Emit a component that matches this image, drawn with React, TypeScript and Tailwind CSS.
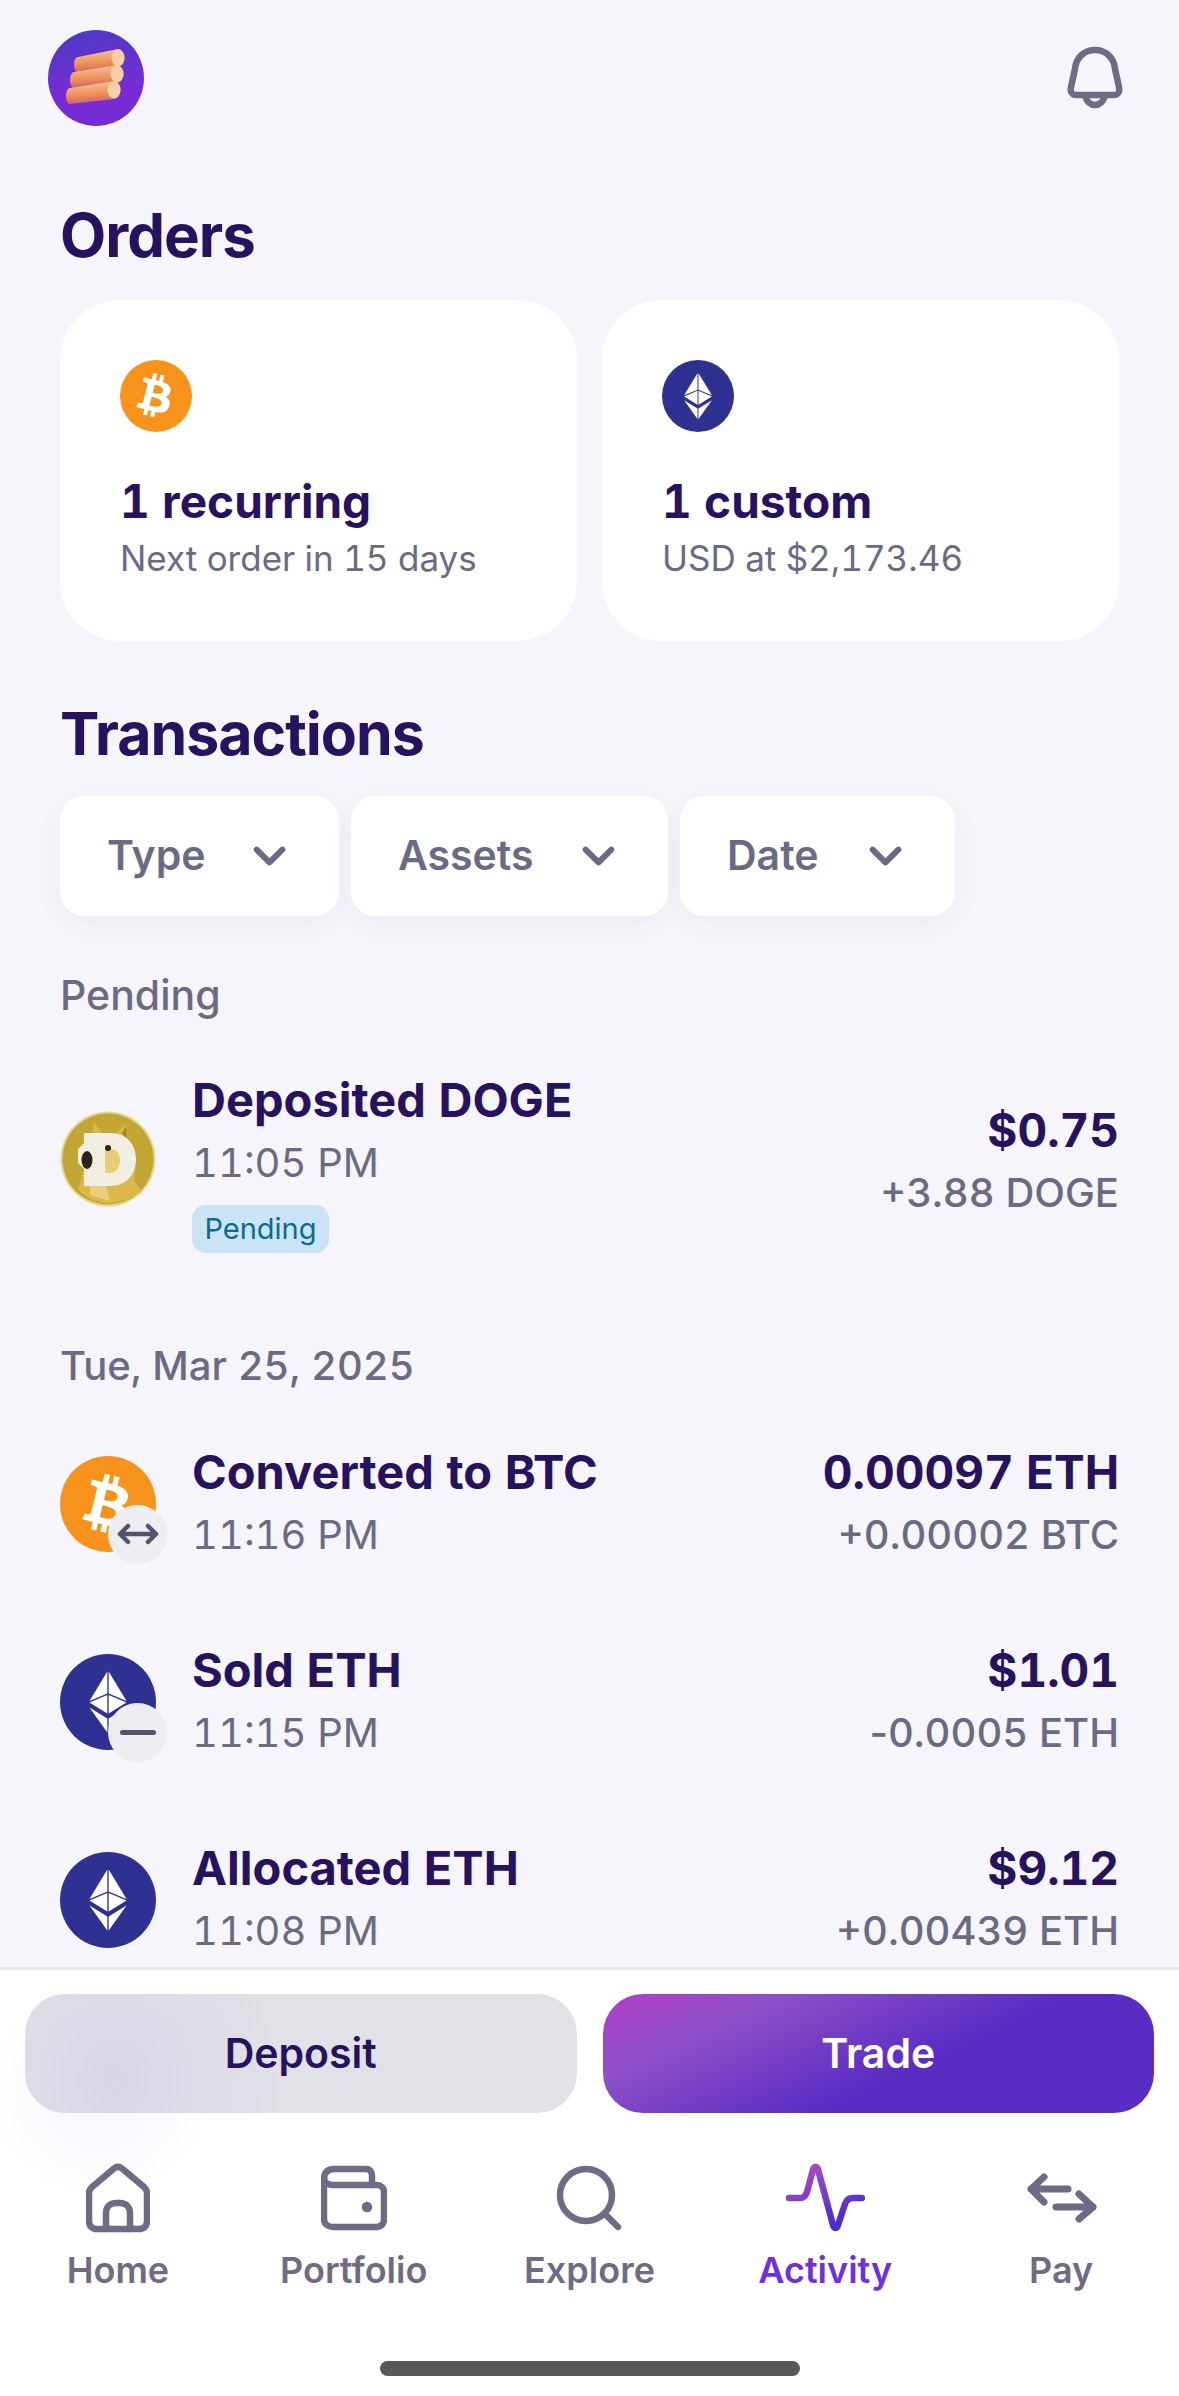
import React from 'react';
import { FaBtc } from 'react-icons/fa';

const font = "font-['Inter','Liberation_Sans',sans-serif]";

const EthMark = () => (
  <svg viewBox="0 0 96 96" className="h-full w-full">
    <circle cx="48" cy="48" r="48" fill="#2f3192" />
    <g fill="#fff">
      <polygon points="47.3,17.5 47.3,39.5 29.5,47" />
      <polygon points="48.7,17.5 48.7,39.5 66.5,47" />
      <polygon points="47.3,41 47.3,59.5 29.5,48.5" />
      <polygon points="48.7,41 48.7,59.5 66.5,48.5" />
      <polygon points="29.5,53.5 47.3,64.5 47.3,78.5" />
      <polygon points="66.5,53.5 48.7,64.5 48.7,78.5" />
    </g>
  </svg>
);

const BtcMark = () => (
  <div className="flex h-full w-full items-center justify-center rounded-full bg-[#f7931a]">
    <FaBtc className="h-[60%] w-[60%] rotate-[14deg] text-white" />
  </div>
);

const DogeMark = () => (
  <svg viewBox="0 0 96 96" className="h-full w-full">
    <circle cx="48" cy="48" r="47.5" fill="#e6d893" />
    <circle cx="48" cy="48" r="45.5" fill="#c2a633" />
    <path d="M32 24 L34 11 L42 22 L56 22 L66 13 L68 30 L76 50 L74 70 L82 80 Q66 92 48 92 Q30 92 18 78 L24 58 Z" fill="#dcb848" />
    <path d="M62 22 L66 15 L67 28 Z" fill="#a8842c" />
    <path d="M30 74 L46 74 L50 90 L30 84 Z" fill="#e8cf7a" />
    <path d="M24 22 H50 C67 22 76 34 76 48 C76 64 66 75 50 75 H24 V58 L18 52 V38 L24 32 Z" fill="#f2efe2" />
    <path d="M45 38 H50 C57 38 60 43 60 49 C60 56 56 62 50 62 H45 Z" fill="#e8cd78" />
    <ellipse cx="27" cy="49" rx="5.5" ry="9" fill="#2a2418" />
    <circle cx="48" cy="37" r="3" fill="#2a2418" />
  </svg>
);

const Logo = () => (
  <div className="h-24 w-24 rounded-full bg-[linear-gradient(170deg,#4b3bc4,#7a2bd6_70%,#6f2fd0)]">
    <svg viewBox="0 0 96 96" className="h-full w-full">
      <defs>
        <linearGradient id="log" x1="0" y1="0" x2="0.15" y2="1">
          <stop offset="0" stopColor="#f5c9a8" />
          <stop offset="0.65" stopColor="#ef8f52" />
          <stop offset="1" stopColor="#c9607a" />
        </linearGradient>
      </defs>
      {[
        [27, 35, 70, 28],
        [23, 50, 69, 44],
        [19, 66, 66, 60],
      ].map(([lx, ly, rx, ry], i) => (
        <g key={i}>
          <path d={`M${lx + 3} ${ly - 8} L${rx} ${ry - 9} A6.5 9 0 0 1 ${rx} ${ry + 9} L${lx + 3} ${ly + 8} A4 8 0 0 1 ${lx + 3} ${ly - 8} Z`} fill="url(#log)" />
          <ellipse cx={rx} cy={ry} rx="6.5" ry="8.5" fill="#f6cfa8" />
        </g>
      ))}
    </svg>
  </div>
);

const Bell = () => (
  <svg viewBox="0 0 60 64" className="h-16 w-[60px]" fill="none" stroke="#6f6b85" strokeWidth="6.5" strokeLinejoin="round" strokeLinecap="round">
    <path d="M10 24 C11 12 20 5 30 5 C40 5 49 12 50 24 L54 42 C55 47 53 50 49 50 H11 C7 50 5 47 6 42 Z" />
    <path d="M20 51 C22 57 26 60 30 60 C34 60 38 57 40 51" />
  </svg>
);

const OrderCard = ({ icon, title, sub }: { icon: React.ReactNode; title: string; sub: string }) => (
  <div className="h-[341px] flex-1 rounded-[60px] bg-white pl-[60px] pt-[60px]">
    <div className="h-[72px] w-[72px]">{icon}</div>
    <div className="mt-[41px] text-[46px] leading-[56px] font-bold text-[#26125f]">{title}</div>
    <div className="mt-[7px] text-[35px] leading-[44px] text-[#6b6a85]">{sub}</div>
  </div>
);

const Filter = ({ label, w }: { label: string; w: string }) => (
  <div className={`flex h-[120px] items-center justify-between rounded-[24px] bg-white pl-[47px] pr-[53px] shadow-[0_8px_24px_rgba(60,50,120,0.05)] ${w}`}>
    <span className="text-[41px] font-semibold text-[#6b6a85]">{label}</span>
    <svg viewBox="0 0 36 24" className="h-[22px] w-[33px]" fill="none" stroke="#6b6a85" strokeWidth="6.5" strokeLinecap="round" strokeLinejoin="round">
      <path d="M4 5 L18 19 L32 5" />
    </svg>
  </div>
);

const Row = ({
  icon,
  badge,
  title,
  time,
  value,
  sub,
  pending,
}: {
  icon: React.ReactNode;
  badge?: React.ReactNode;
  title: string;
  time: string;
  value: string;
  sub: React.ReactNode;
  pending?: boolean;
}) => (
  <div className="flex items-center">
    <div className={`relative h-24 w-24 shrink-0 ${pending ? 'mt-[41px] self-start' : ''}`}>
      {icon}
      {badge && (
        <div className="absolute left-[48px] top-[49px] flex h-[59px] w-[59px] items-center justify-center rounded-full bg-[#eeeef2]">
          {badge}
        </div>
      )}
    </div>
    <div className="ml-[36px] flex-1">
      <div className="text-[47px] leading-[60px] font-bold text-[#26125f]">{title}</div>
      <div className="mt-[3px] text-[40px] leading-[60px] text-[#6b6a85]">{time}</div>
      {pending && (
        <div className="mt-[12px] flex h-[48px] w-[137px] items-center justify-center rounded-[14px] bg-[#cbe4f5] text-[29px] text-[#0b6a96]">
          Pending
        </div>
      )}
    </div>
    <div className={`text-right ${pending ? 'self-start pt-[30px]' : ''}`}>
      <div className="text-[46px] leading-[60px] font-bold text-[#26125f]">{value}</div>
      <div className="mt-[3px] text-[40px] leading-[60px] font-medium text-[#6b6a85]">{sub}</div>
    </div>
  </div>
);

const navIcon = { fill: 'none', stroke: '#6f6b85', strokeWidth: 6.5, strokeLinecap: 'round', strokeLinejoin: 'round' } as const;

const NavItem = ({ label, active, children }: { label: string; active?: boolean; children: React.ReactNode }) => (
  <div className="flex w-[236px] flex-col items-center">
    <div className="flex h-[72px] items-center justify-center">{children}</div>
    <div className={`mt-[13px] text-[36px] leading-[46px] font-semibold ${active ? 'text-[#6d2fe0]' : 'text-[#6f6b85]'}`}>{label}</div>
  </div>
);

export default function App() {
  return (
    <div className={`${font} flex h-[2396px] w-[1179px] flex-col overflow-hidden bg-[#f5f5fb] tabular-nums`}>
      <div className="h-[1967px] shrink-0 overflow-hidden">
        <div className="flex items-start justify-between pl-[48px] pr-[54px] pt-[30px]">
          <Logo />
          <div className="mt-[15px]">
            <Bell />
          </div>
        </div>
        <div className="px-[60px]">
          <h1 className="mt-[75px] text-[60px] leading-[68px] font-bold tracking-[-1px] text-[#26125f]">Orders</h1>
          <div className="mt-[31px] flex gap-[25px]">
            <OrderCard icon={<BtcMark />} title="1 recurring" sub="Next order in 15 days" />
            <OrderCard icon={<EthMark />} title="1 custom" sub="USD at $2,173.46" />
          </div>
          <h2 className="mt-[59px] text-[59px] leading-[68px] font-bold tracking-[-1px] text-[#26125f]">Transactions</h2>
          <div className="mt-[28px] flex gap-[12px]">
            <Filter label="Type" w="w-[279px]" />
            <Filter label="Assets" w="w-[317px]" />
            <Filter label="Date" w="w-[275px]" />
          </div>
          <div className="mt-[54px] text-[41px] leading-[50px] font-medium text-[#6b6a85]">Pending</div>
          <div className="mt-[50px]">
            <Row icon={<DogeMark />} title="Deposited DOGE" time="11:05 PM" value="$0.75" sub="+3.88 DOGE" pending />
          </div>
          <div className="mt-[88px] text-[40px] leading-[50px] font-medium text-[#6b6a85]">Tue, Mar 25, 2025</div>
          <div className="mt-[51px] flex flex-col gap-[75px]">
            <Row
              icon={<BtcMark />}
              badge={
                <svg viewBox="0 0 44 24" className="h-6 w-11" fill="none" stroke="#55536b" strokeWidth="4.5" strokeLinecap="round" strokeLinejoin="round">
                  <path d="M4 12 H40 M12 4 L4 12 L12 20 M32 4 L40 12 L32 20" />
                </svg>
              }
              title="Converted to BTC"
              time="11:16 PM"
              value="0.00097 ETH"
              sub="+0.00002 BTC"
            />
            <Row
              icon={<EthMark />}
              badge={<div className="h-[5px] w-[36px] rounded-full bg-[#55536b]" />}
              title="Sold ETH"
              time="11:15 PM"
              value="$1.01"
              sub={
                <>
                  <span className="normal-nums">-</span>0.0005 ETH
                </>
              }
            />
            <Row icon={<EthMark />} title="Allocated ETH" time="11:08 PM" value="$9.12" sub="+0.00439 ETH" />
          </div>
        </div>
      </div>

      <div className="flex-1 border-t-[3px] border-[#e8e8ec] bg-[radial-gradient(circle_at_100px_120px,rgba(120,120,235,0.08),transparent_110px),linear-gradient(#fff,#fff)]">
        <div className="mt-[24px] flex gap-[26px] px-[25px]">
          <button className="h-[119px] flex-1 rounded-[40px] bg-[radial-gradient(circle_at_90px_85px,#d8d6e6,transparent_170px),linear-gradient(#e2e1e7,#e2e1e7)] text-[41px] font-semibold text-[#26125f]">
            Deposit
          </button>
          <button className="h-[119px] flex-1 rounded-[40px] bg-[linear-gradient(155deg,#b23fc6_0%,#8f4fc8_22%,#5a2cc4_58%,#5a2cc4_100%)] text-[41px] font-semibold text-white">
            Trade
          </button>
        </div>
        <div className="mt-[49px] flex">
          <NavItem label="Home">
            <svg viewBox="0 0 64 70" className="h-[70px] w-16" {...navIcon}>
              <path d="M3 30 C3 27 4 26 6 24 L28 5.5 C30.5 3.5 33.5 3.5 36 5.5 L58 24 C60 26 61 27 61 30 V58 C61 63 58 66 53 66 H11 C6 66 3 63 3 58 Z" />
              <path d="M20 66 V50 C20 44 24 40 30 40 H34 C40 40 44 44 44 50 V66" />
            </svg>
          </NavItem>
          <NavItem label="Portfolio">
            <svg viewBox="0 0 66 66" className="h-[66px] w-[66px]" {...navIcon}>
              <path d="M3 14 C3 7 7 4 13 4 H45 C49 4 51 7 51 11 V20 H56 C60 20 63 23 63 27 V54 C63 59 60 62 55 62 H12 C7 62 3 59 3 54 Z" />
              <path d="M3 14 C4 18 7 20 12 20 H51" />
              <circle cx="46" cy="42" r="2" fill="#6f6b85" />
            </svg>
          </NavItem>
          <NavItem label="Explore">
            <svg viewBox="0 0 66 66" className="h-[66px] w-[66px]" {...navIcon}>
              <circle cx="30" cy="30" r="26" />
              <path d="M50 50 L62 62" />
            </svg>
          </NavItem>
          <NavItem label="Activity" active>
            <svg viewBox="0 0 80 72" className="h-[72px] w-20" fill="none" strokeWidth="6.5" strokeLinecap="round" strokeLinejoin="round">
              <defs>
                <linearGradient id="act" x1="0" y1="0" x2="0.6" y2="1">
                  <stop offset="0" stopColor="#b44fc8" />
                  <stop offset="1" stopColor="#4a2cc8" />
                </linearGradient>
              </defs>
              <path d="M4 36 H15 C19 36 20.5 34 22 30 L28 7.5 C29 4 32 4 33 7.5 L48 63 C49 67 52 67 53 63 L60 42 C61.5 37.5 64 36 68 36 H77" stroke="url(#act)" />
            </svg>
          </NavItem>
          <NavItem label="Pay">
            <svg viewBox="0 0 72 50" className="h-[50px] w-[72px]" {...navIcon} strokeWidth="7">
              <path d="M19 4 L6 16 L19 29 M6 16 H43" />
              <path d="M54 21 L68 34 L54 46 M68 34 H31" />
            </svg>
          </NavItem>
        </div>
        <div className="mx-auto mt-[68px] h-[15px] w-[420px] rounded-full bg-[#585858]" />
      </div>
    </div>
  );
}
